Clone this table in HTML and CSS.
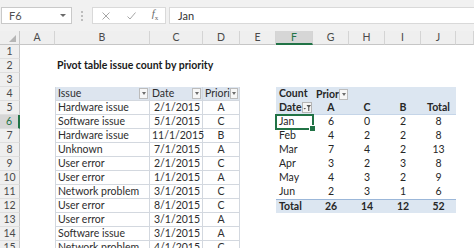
FILE: index.html
```html
<!DOCTYPE html>
<html>
<head>
<meta charset="utf-8">
<title>Pivot table issue count by priority</title>
<link rel="stylesheet" href="styles.css">
</head>
<body>
<div class="app">
  <div class="fbar">
    <div class="namebox"><span>F6</span><span class="tri-sm"></span></div>
    <div class="vdots"></div>
    <div class="fbtns">
      <svg width="8" height="8" viewBox="0 0 8 8"><path d="M0.5 0.5 L7.5 7.5 M7.5 0.5 L0.5 7.5" stroke="#a6a6a6" stroke-width="1" fill="none"/></svg>
      <svg width="9" height="8" viewBox="0 0 9 8"><path d="M0.5 4.5 L3 7 L8.5 0.5" stroke="#a6a6a6" stroke-width="1" fill="none"/></svg>
      <span class="fx"><i>f</i><sub>x</sub></span>
    </div>
    <div class="finput">Jan</div>
  </div>

  <div class="sheet">
    <div class="row">
      <div class="corner"><svg class="ctri" width="7" height="7" viewBox="0 0 7 7"><polygon points="7,0 7,7 0,7" fill="#b5b5b5"/></svg></div>
      <div class="ch">A</div><div class="ch">B</div><div class="ch">C</div><div class="ch">D</div><div class="ch">E</div><div class="ch sel">F</div><div class="ch">G</div><div class="ch">H</div><div class="ch">I</div><div class="ch">J</div><div class="ch"></div>
    </div>

    <div class="row">
      <div class="rh">1</div><div></div><div></div><div></div><div></div><div></div><div></div><div></div><div></div><div></div><div></div><div></div>
    </div>

    <div class="row">
      <div class="rh">2</div><div></div><div class="title">Pivot table issue count by priority</div><div></div><div></div><div></div><div></div><div></div><div></div><div></div><div></div><div></div>
    </div>

    <div class="row">
      <div class="rh">3</div><div></div><div></div><div></div><div></div><div></div><div></div><div></div><div></div><div></div><div></div><div></div>
    </div>

    <div class="row">
      <div class="rh">4</div><div></div>
      <div class="t th first"><span>Issue</span><span class="dd"><span class="tri"></span></span></div>
      <div class="t th"><span>Date</span><span class="dd"><span class="tri"></span></span></div>
      <div class="t th"><span>Priori</span><span class="dd"><span class="tri"></span></span></div>
      <div></div>
      <div class="p ph pl">Count</div>
      <div class="p ph pl phb"><span>Prior</span><span class="dd"><span class="tri"></span></span></div>
      <div class="p ph"></div><div class="p ph"></div><div class="p ph"></div>
      <div></div>
    </div>

    <div class="row">
      <div class="rh">5</div><div></div>
      <div class="t first">Hardware issue</div><div class="t r">2/1/2015</div><div class="t c">A</div>
      <div></div>
      <div class="p ph ph2 pl phb"><span>Date</span><span class="fb"><svg width="8" height="8" viewBox="0 0 8 8"><polygon points="0.5,4 3,4 1.75,5.5" fill="#555"/><polygon points="3.5,1 8,1 6.3,3.2 6.3,7 5.2,7 5.2,3.2" fill="#555"/></svg></span></div>
      <div class="p ph ph2">A</div><div class="p ph ph2">C</div><div class="p ph ph2">B</div><div class="p ph ph2">Total</div>
      <div></div>
    </div>

    <div class="row">
      <div class="rh sel">6</div><div></div>
      <div class="t first">Software issue</div><div class="t r">5/1/2015</div><div class="t c">C</div>
      <div></div>
      <div class="p pl selcell">Jan</div><div class="p">6</div><div class="p">0</div><div class="p">2</div><div class="p">8</div>
      <div></div>
    </div>

    <div class="row">
      <div class="rh">7</div><div></div>
      <div class="t first">Hardware issue</div><div class="t r">11/1/2015</div><div class="t c">B</div>
      <div></div>
      <div class="p pl">Feb</div><div class="p">4</div><div class="p">2</div><div class="p">2</div><div class="p">8</div>
      <div></div>
    </div>

    <div class="row">
      <div class="rh">8</div><div></div>
      <div class="t first">Unknown</div><div class="t r">7/1/2015</div><div class="t c">A</div>
      <div></div>
      <div class="p pl">Mar</div><div class="p">7</div><div class="p">4</div><div class="p">2</div><div class="p">13</div>
      <div></div>
    </div>

    <div class="row">
      <div class="rh">9</div><div></div>
      <div class="t first">User error</div><div class="t r">2/1/2015</div><div class="t c">C</div>
      <div></div>
      <div class="p pl">Apr</div><div class="p">3</div><div class="p">2</div><div class="p">3</div><div class="p">8</div>
      <div></div>
    </div>

    <div class="row">
      <div class="rh">10</div><div></div>
      <div class="t first">User error</div><div class="t r">1/1/2015</div><div class="t c">A</div>
      <div></div>
      <div class="p pl">May</div><div class="p">4</div><div class="p">3</div><div class="p">2</div><div class="p">9</div>
      <div></div>
    </div>

    <div class="row">
      <div class="rh">11</div><div></div>
      <div class="t first">Network problem</div><div class="t r">3/1/2015</div><div class="t c">C</div>
      <div></div>
      <div class="p pl">Jun</div><div class="p">2</div><div class="p">3</div><div class="p">1</div><div class="p">6</div>
      <div></div>
    </div>

    <div class="row">
      <div class="rh">12</div><div></div>
      <div class="t first">User error</div><div class="t r">8/1/2015</div><div class="t c">C</div>
      <div></div>
      <div class="p pt pl">Total</div><div class="p pt">26</div><div class="p pt">14</div><div class="p pt">12</div><div class="p pt">52</div>
      <div></div>
    </div>

    <div class="row">
      <div class="rh">13</div><div></div>
      <div class="t first">User error</div><div class="t r">3/1/2015</div><div class="t c">A</div>
      <div></div><div></div><div></div><div></div><div></div><div></div><div></div>
    </div>

    <div class="row">
      <div class="rh">14</div><div></div>
      <div class="t first">Software issue</div><div class="t r">3/1/2015</div><div class="t c">A</div>
      <div></div><div></div><div></div><div></div><div></div><div></div><div></div>
    </div>

    <div class="row">
      <div class="rh">15</div><div></div>
      <div class="t first">Network problem</div><div class="t r">4/1/2015</div><div class="t c">C</div>
      <div></div><div></div><div></div><div></div><div></div><div></div><div></div>
    </div>
  </div>
</div>
</body>
</html>
```

FILE: styles.css
```css
* { box-sizing: border-box; margin: 0; padding: 0; }

html, body {
  width: 474px;
  height: 248px;
  overflow: hidden;
  background: #ffffff;
}

body {
  font-family: Lato, "Open Sans", sans-serif;
  font-size: 11px;
  color: #2b2b2b;
}

.app {
  width: 474px;
  height: 248px;
  overflow: hidden;
}

/* formula bar */
.fbar {
  height: 31px;
  background: #f1f1f1;
  display: flex;
  align-items: center;
  padding-left: 1px;
}

.namebox {
  width: 71px;
  height: 17px;
  background: #ffffff;
  border: 1px solid #c9c9c9;
  display: flex;
  align-items: center;
  justify-content: space-between;
  padding: 0 5px 0 7px;
  color: #505050;
  font-size: 11px;
}

.tri-sm {
  width: 0;
  height: 0;
  border-left: 3px solid transparent;
  border-right: 3px solid transparent;
  border-top: 3px solid #6a6a6a;
}

.vdots {
  width: 2px;
  height: 10px;
  margin-left: 9px;
  border-left: 2px dotted #bdbdbd;
}

.fbtns {
  margin-left: 9px;
  width: 74px;
  height: 17px;
  background: #ffffff;
  border: 1px solid #d9d9d9;
  display: grid;
  grid-template-columns: 25px 26px 22px;
  align-items: center;
  justify-items: center;
}

.fx {
  font-family: "Liberation Serif", serif;
  font-size: 11px;
  color: #6a6a6a;
  line-height: 1;
}

.fx sub {
  font-size: 7px;
}

.finput {
  flex: 1;
  margin-left: 3px;
  height: 17px;
  background: #ffffff;
  border: 1px solid #d9d9d9;
  border-right: none;
  padding-left: 8px;
  line-height: 15px;
  color: #333333;
}

/* sheet grid */
.sheet {
  display: grid;
  grid-template-columns: 20px 35px 95px 53px 37px 36px 37px 36px 36px 36px 35px 18px;
  grid-template-rows: repeat(16, 14px);
  line-height: 13px;
  font-size: 10.5px;
}

.row { display: contents; }

.sheet .row > div {
  white-space: nowrap;
  padding: 0 2px;
}

.corner {
  background: #efefef;
  border-right: 1px solid #c6c6c6;
  border-bottom: 1px solid #c6c6c6;
  position: relative;
}

.ctri {
  position: absolute;
  right: 3px;
  bottom: 2px;
}

.ch {
  background: #efefef;
  border-right: 1px solid #d4d4d4;
  border-bottom: 1px solid #c6c6c6;
  text-align: center;
  color: #4a4a4a;
}

.ch.sel {
  background: #d6d6d6;
  color: #217346;
  border-bottom: 2px solid #217346;
}

.rh {
  background: #efefef;
  border-right: 1px solid #c6c6c6;
  border-bottom: 1px solid #dedede;
  text-align: center;
  color: #4a4a4a;
}

.rh.sel {
  background: #d6d6d6;
  color: #217346;
  border-right: 2px solid #217346;
}

.title {
  font-weight: bold;
  color: #1a1a1a;
  overflow: visible;
}

/* data table */
.t {
  border-right: 1px solid #d3d8df;
  border-bottom: 1px solid #d3d8df;
  color: #2e2e2e;
}

.t.first { border-left: 1px solid #d3d8df; }
.t.r { text-align: right; }
.t.c { text-align: center; }

.th {
  background: #dde5ef;
  display: flex;
  align-items: center;
  justify-content: space-between;
  padding: 0 1px 0 2px !important;
}

.dd {
  width: 9px;
  height: 11px;
  border: 1px solid #bcbcbc;
  background: #f7f7f7;
  display: flex;
  align-items: center;
  justify-content: center;
}

.tri {
  width: 0;
  height: 0;
  border-left: 2.5px solid transparent;
  border-right: 2.5px solid transparent;
  border-top: 3px solid #6d6d6d;
}

/* pivot table */
.p {
  text-align: center;
  color: #262626;
}

.pl {
  text-align: left;
  padding-left: 3px !important;
}

.ph {
  background: #dce6f1;
  font-weight: bold;
}

.ph2 {
  border-bottom: 1px solid #c5d5e8;
}

.phb {
  display: flex;
  align-items: center;
  justify-content: space-between;
  padding-right: 1px !important;
}

.fb {
  width: 10px;
  height: 11px;
  border: 1px solid #b5b5b5;
  background: #f4f4f4;
  display: flex;
  align-items: center;
  justify-content: center;
}

.pt {
  background: #dce6f1;
  font-weight: bold;
  border-top: 1px solid #9bb7d9;
}

.selcell {
  position: relative;
}

.selcell::after {
  content: "";
  position: absolute;
  left: -1px;
  top: -1px;
  right: -1px;
  bottom: -1px;
  border: 2px solid #217346;
}

.selcell::before {
  content: "";
  position: absolute;
  right: -3px;
  bottom: -3px;
  width: 5px;
  height: 5px;
  background: #217346;
  border: 1px solid #ffffff;
  z-index: 2;
}
```
